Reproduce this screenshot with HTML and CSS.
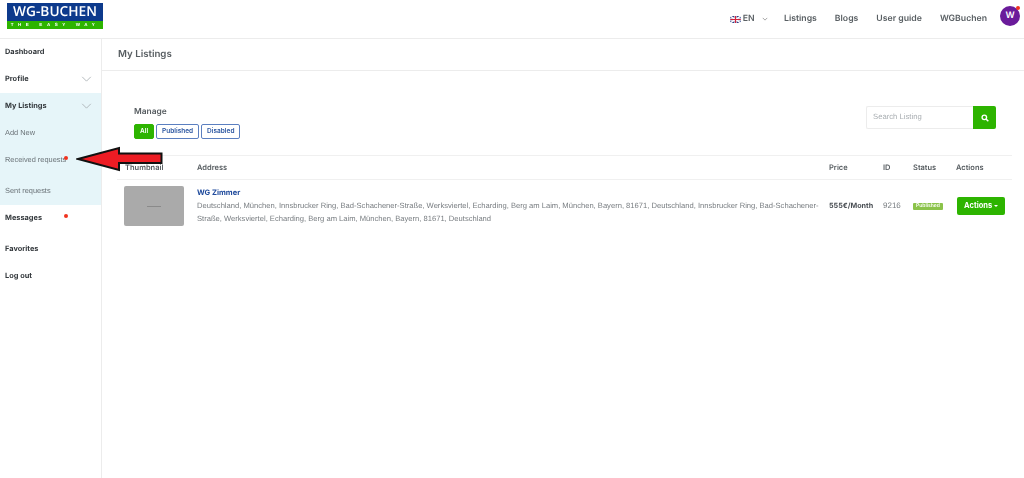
FILE: index.html
```html
<!DOCTYPE html>
<html lang="en">
<head>
<meta charset="utf-8">
<title>My Listings</title>
<link rel="stylesheet" href="styles.css">
</head>
<body>
<header class="topbar">
  <div class="logo">
    <div class="logo-top">WG-BUCHEN</div>
    <div class="logo-bottom">THE EASY WAY</div>
  </div>
  <nav class="topnav">
    <span class="lang">
      <svg class="flag" viewBox="0 0 12 8" width="11" height="7"><rect width="12" height="8" fill="#2b3f86"/><path d="M0 0L12 8M12 0L0 8" stroke="#fff" stroke-width="1.6"/><path d="M6 0V8M0 4H12" stroke="#fff" stroke-width="2.6"/><path d="M6 0V8M0 4H12" stroke="#d3223c" stroke-width="1.4"/></svg>
      <span>EN</span>
      <svg class="lang-caret" viewBox="0 0 8 5" width="6" height="4"><path d="M1 1L4 4L7 1" fill="none" stroke="#888" stroke-width="1"/></svg>
    </span>
    <a class="toplink">Listings</a>
    <a class="toplink">Blogs</a>
    <a class="toplink">User guide</a>
    <a class="toplink">WGBuchen</a>
    <span class="avatar">W<i class="avatar-dot"></i></span>
  </nav>
</header>
<div class="shell">
  <aside class="sidebar">
    <div class="item strong">Dashboard</div>
    <div class="item strong">Profile<svg class="chev" viewBox="0 0 12 7" width="11" height="6"><path d="M1 1L6 6L11 1" fill="none" stroke="#a9b0b3" stroke-width="1"/></svg></div>
    <div class="group">
      <div class="item strong">My Listings<svg class="chev" viewBox="0 0 12 7" width="11" height="6"><path d="M1 1L6 6L11 1" fill="none" stroke="#a9b0b3" stroke-width="1"/></svg></div>
      <div class="item">Add New</div>
      <div class="item tall">Received requests<i class="dot dot-received"></i></div>
      <div class="item">Sent requests</div>
    </div>
    <div class="item strong tall">Messages<i class="dot dot-messages"></i></div>
    <div class="item strong">Favorites</div>
    <div class="item strong">Log out</div>
  </aside>
  <main class="content">
    <div class="page-head">My Listings</div>
    <section class="panel">
      <div class="toolbar">
        <div>
          <div class="manage">Manage</div>
          <div class="filters">
            <button class="filter active">All</button>
            <button class="filter">Published</button>
            <button class="filter">Disabled</button>
          </div>
        </div>
        <div class="search">
          <div class="search-input">Search Listing</div>
          <button class="search-btn"><svg viewBox="0 0 12 12" width="8" height="8"><circle cx="5" cy="5" r="3.4" fill="none" stroke="#fff" stroke-width="2"/><path d="M7.5 7.5L11 11" stroke="#fff" stroke-width="2.2"/></svg></button>
        </div>
      </div>
      <div class="row row-head">
        <div>Thumbnail</div><div>Address</div><div>Price</div><div>ID</div><div>Status</div><div>Actions</div>
      </div>
      <div class="row row-body">
        <div class="thumb"><i class="thumb-mark"></i></div>
        <div>
          <div class="title">WG Zimmer</div>
          <div class="address">Deutschland, München, Innsbrucker Ring, Bad-Schachener-Straße, Werksviertel, Echarding, Berg am Laim, München, Bayern, 81671, Deutschland, Innsbrucker Ring, Bad-Schachener-Straße, Werksviertel, Echarding, Berg am Laim, München, Bayern, 81671, Deutschland</div>
        </div>
        <div class="price">555€/Month</div>
        <div class="id">9216</div>
        <div><span class="badge">Published</span></div>
        <div><button class="actions">Actions <i class="caret"></i></button></div>
      </div>
    </section>
  </main>
</div>
<svg class="arrow" viewBox="0 0 90 26" width="90" height="26"><path d="M2 13L43 2V7.500H85.500V17H43V24Z" fill="#ed1c24" stroke="#111" stroke-width="2"/></svg>
</body>
</html>
```
FILE: styles.css
```css
* { box-sizing: border-box; }
html, body { margin: 0; height: 100%; }
body { font-family: Inter, "Liberation Sans", sans-serif; background: #fff; color: #3e4449; position: relative; overflow: hidden; text-rendering: geometricPrecision; filter: blur(.3px); }
.topbar { height: 39px; display: flex; justify-content: space-between; padding: 3px 4px 0 7px; border-bottom: 1px solid #ececec; }
.logo { width: 96px; height: 26px; display: flex; flex-direction: column; }
.logo-top { height: 18px; background: #0d3a8c; color: #fff; font: 600 13.700px/18px "Open Sans", sans-serif; text-align: center; }
.logo-bottom { height: 8px; background: #2db400; color: #fff; font: bold 4.500px/8px "Liberation Sans", sans-serif; letter-spacing: 4.600px; text-align: center; white-space: nowrap; }
.topnav { display: flex; align-items: flex-start; }
.lang { display: flex; align-items: center; gap: 2px; font-size: 8.700px; font-weight: 600; color: #5a6064; margin: 11px 16.500px 0 0; height: 10px; }
.lang-caret { margin-left: 5px; }
.toplink { font-size: 8.700px; font-weight: 600; color: #5a6064; margin: 10px 18px 0 0; line-height: 12px; }
.toplink:nth-child(5) { margin-right: 13px; }
.avatar { position: relative; width: 20px; height: 20px; margin-top: 3px; background: #6a1b9a; border-radius: 50%; color: #fff; font-size: 9px; font-weight: 600; line-height: 20px; text-align: center; }
.avatar-dot { position: absolute; top: 0; right: 0; width: 4px; height: 4px; border-radius: 50%; background: #f0321e; }
.shell { display: flex; height: 439px; }
.sidebar { width: 102px; flex: none; border-right: 1px solid #ececec; }
.item { position: relative; height: 27px; padding: 0 9px 2px 5px; display: flex; align-items: center; justify-content: space-between; font: 7.400px "Liberation Sans", sans-serif; color: #6b7378; white-space: nowrap; }
.item.strong { font: 700 7.400px Inter, sans-serif; color: #33383c; }
.item.tall { height: 31px; align-items: flex-start; padding-top: 8px; }
.group { background: #e6f5f9; }
.dot { position: absolute; width: 4px; height: 4px; border-radius: 50%; background: #f0321e; }
.dot-received { left: 64px; top: 9px; }
.dot-messages { left: 64px; top: 9px; }
.content { flex: 1; }
.page-head { height: 32px; padding-left: 16px; font-size: 9.700px; font-weight: 600; line-height: 31px; color: #575d61; border-bottom: 1px solid #ececec; }
.panel { padding: 35px 12px 0 15px; }
.toolbar { display: flex; justify-content: space-between; height: 49px; padding: 0 16px 0 17px; }
.manage { font-size: 8.400px; font-weight: 600; color: #575d61; line-height: 11px; margin: 1px 0 6px; }
.filters { display: flex; gap: 2px; }
.filter { height: 15px; padding: 0 5px; border: 1px solid #5b7fc0; border-radius: 2px; background: #fff; color: #2a55a0; font: 600 6.500px/13px Inter, sans-serif; }
.filter.active { background: #2db400; border-color: #2db400; color: #fff; padding: 0 5px; width: 20px; }
.search { display: flex; height: 23px; }
.search-input { width: 107px; border: 1px solid #ececec; border-right: 0; border-radius: 2px 0 0 2px; padding-left: 6px; font: 7.700px/20px "Liberation Sans", sans-serif; color: #a9aeb2; }
.search-btn { width: 23px; border: 0; padding: 0; background: #2db400; border-radius: 0 2px 2px 0; }
.row { display: grid; grid-template-columns: 72px 632px 54px 30px 43px 1fr; }
.row-head { height: 25px; align-items: center; border-top: 1px solid #f0f0f0; border-bottom: 1px solid #f0f0f0; padding: 0 0 0 8px; font-size: 7.500px; font-weight: 600; color: #575d61; }
.row-body { padding: 6px 0 0 8px; align-items: start; font-size: 7.500px; }
.thumb { width: 60px; height: 40px; margin-left: -1px; background: #aaa; border-radius: 2px; display: flex; align-items: center; justify-content: center; }
.thumb-mark { width: 14px; height: 1px; background: #8a8a8a; }
.title { font: 700 7.500px/13px Inter, sans-serif; color: #1f4a9c; }
.address { font: 7.600px/13px "Liberation Sans", sans-serif; color: #787d81; width: 628px; }
.price { font-size: 7.200px; font-weight: 700; color: #4b5055; margin-top: 15px; }
.id { font: 8px "Liberation Sans", sans-serif; color: #787d81; margin-top: 15px; }
.badge { display: inline-block; margin-top: 17px; height: 7px; padding: 0 3px; background: #8bc34a; color: #fff; font: 600 5px/7px Inter, sans-serif; border-radius: 1px; vertical-align: top; }
.actions { margin-top: 11px; margin-left: 1px; width: 48px; height: 18px; padding: 0; border: 0; border-radius: 2px; background: #2db400; color: #fff; font: 700 7.500px/18px Inter, sans-serif; }
.caret { display: inline-block; vertical-align: middle; border: 2px solid transparent; border-top-color: #fff; border-bottom: 0; }
.arrow { position: absolute; left: 76px; top: 146px; }
```
